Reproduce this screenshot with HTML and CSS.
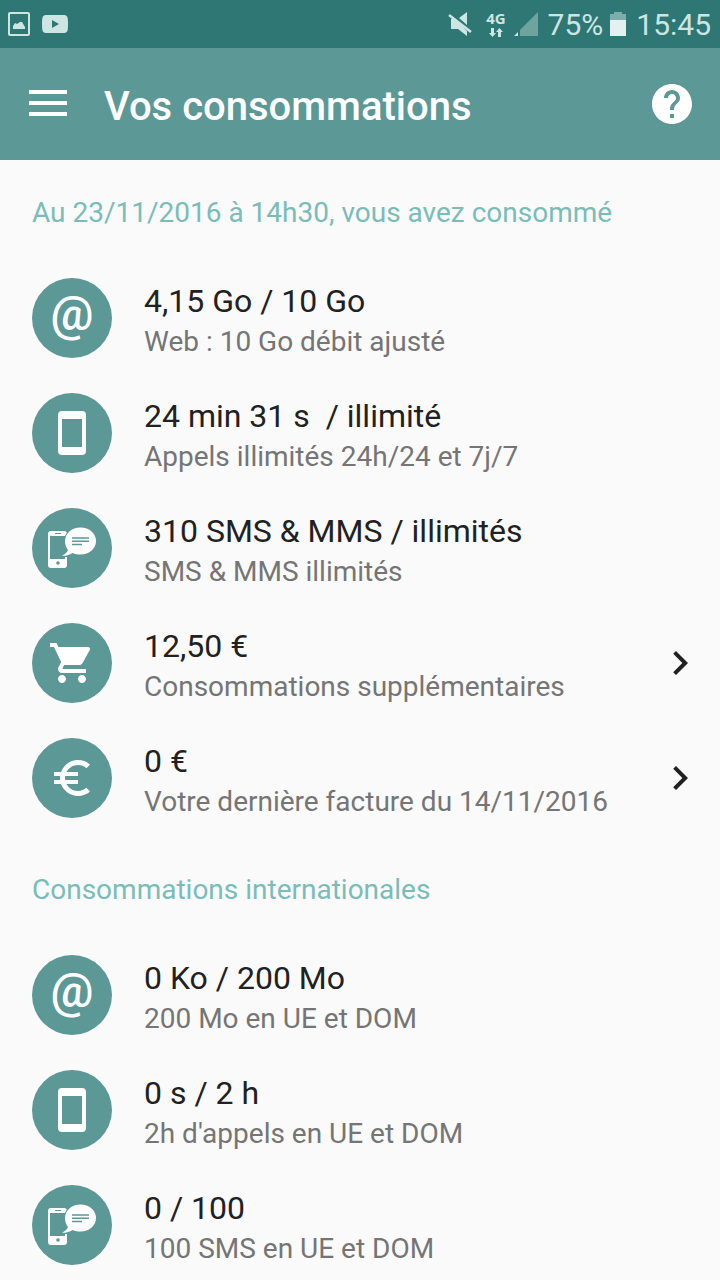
FILE: index.html
```html
<!DOCTYPE html>
<html lang="fr">
<head>
<meta charset="utf-8">
<meta name="viewport" content="width=device-width, initial-scale=1">
<title>Vos consommations</title>
<link rel="stylesheet" href="styles.css">
</head>
<body>
<svg class="sprite" aria-hidden="true">
  <symbol id="phone" viewBox="0 0 80 80"><path fill-rule="evenodd" d="M30 18h20a4 4 0 0 1 4 4v36a4 4 0 0 1-4 4H30a4 4 0 0 1-4-4V22a4 4 0 0 1 4-4zM30 26v28h20V26z"/></symbol>
  <symbol id="sms" viewBox="0 0 80 80">
    <rect x="16" y="23" width="19" height="37" rx="3"/>
    <path class="hole" d="M18 28h18v21h-3v2H18z"/>
    <rect class="hole" x="23" y="25" width="6" height="1"/>
    <circle class="hole" cx="26" cy="55" r="1.8"/>
    <path class="bubble" d="M48.500 19.500C57.500 19.500 64 25.500 64 33S57.500 46.500 48.500 46.500C45.500 46.500 43 46 40.500 45C37.500 47 34 48 30 47.800C33 46 35 44.500 36 42C34 39.500 33 36.500 33 33C33 25.500 39.500 19.500 48.500 19.500z"/>
    <path class="lines" d="M40 30h17M40 33.300h17M40 36.600h10"/>
  </symbol>
  <symbol id="cart" viewBox="-8 -8 40 40"><path d="M7 18c-1.100 0-1.990.9-1.990 2S5.900 22 7 22s2-.9 2-2-.9-2-2-2zM1 2v2h2l3.600 7.590-1.350 2.450c-.16.280-.25.610-.25.960 0 1.100.9 2 2 2h12v-2H7.420c-.14 0-.25-.11-.25-.25l.03-.12.900-1.630h7.450c.75 0 1.410-.41 1.750-1.030l3.580-6.490c.08-.14.120-.31.120-.48 0-.55-.45-1-1-1H5.210l-.94-2H1zm16 16c-1.100 0-1.990.9-1.990 2s.89 2 1.990 2 2-.9 2-2-.9-2-2-2z"/></symbol>
  <symbol id="euro" viewBox="-8 -8 40 40"><path d="M15 18.500c-2.510 0-4.680-1.420-5.760-3.500H15v-2H8.580c-.05-.33-.08-.66-.08-1s.03-.67.080-1H15V9H9.240C10.320 6.920 12.500 5.500 15 5.500c1.610 0 3.090.59 4.230 1.570L21 5.300C19.410 3.870 17.300 3 15 3c-3.920 0-7.240 2.510-8.480 6H3v2h3.060c-.04.330-.06.660-.06 1s.02.670.060 1H3v2h3.520c1.240 3.490 4.560 6 8.480 6 2.310 0 4.410-.87 6-2.300l-1.780-1.770c-1.130.980-2.600 1.570-4.220 1.570z"/></symbol>
  <symbol id="chevron" viewBox="0 0 24 24"><path d="M10 6L8.590 7.410 13.170 12l-4.580 4.590L10 18l6-6z"/></symbol>
</svg>

<div class="status-bar">
  <div class="status-group notifications">
    <svg width="22" height="24" viewBox="0 0 22 24" aria-hidden="true"><rect x="1" y="1" width="20" height="22" rx="1" fill="none" stroke="currentColor" stroke-width="2"/><path d="M5 17v-3l2-3 2 1 3-2 2 0 3 5v2z"/></svg>
    <svg width="26" height="18" viewBox="0 0 26 18" aria-hidden="true"><path fill-rule="evenodd" d="M4 0Q13-.5 22 0Q25.500 0 25.800 4Q26.200 9 25.800 14Q25.500 18 22 18Q13 18.500 4 18Q.5 18 .2 14Q-.2 9 .2 4Q.5 0 4 0zM10 5v8l7-4z"/></svg>
  </div>
  <div class="status-group">
    <svg width="24" height="26" viewBox="0 0 24 26" aria-hidden="true"><path d="M3 8h4l12 12v5l-9-7H3zM11 7l8-6v13z"/><path d="M1 4l22 17" fill="none" stroke="currentColor" stroke-width="2.500"/></svg>
    <div class="network">
      <span class="network-type">4G</span>
      <svg width="14" height="9" viewBox="0 0 14 9" aria-hidden="true"><path d="M2 0h3v5h2l-3.500 4L0 5h2zM9 9h3V4h2l-3.500-4L7 4h2z"/></svg>
    </div>
    <svg class="signal" width="24" height="24" viewBox="0 0 24 24" aria-hidden="true"><path opacity=".4" d="M24 0v24H6V18z"/><path d="M4 20v4H0z"/></svg>
    <div class="battery">
      <span class="status-text">75%</span>
      <svg width="16" height="24" viewBox="0 0 16 24" aria-hidden="true"><path opacity=".5" d="M4 0h8v2h4v6H0V2h4z"/><path class="charge" d="M0 8h16v16H0z"/></svg>
    </div>
    <time class="status-text">15:45</time>
  </div>
</div>

<header class="app-bar">
  <button class="icon-button" type="button" aria-label="Menu"><svg width="38" height="28" viewBox="0 0 38 28"><path d="M0 0h38v4H0zM0 11h38v4H0zM0 22h38v4H0z"/></svg></button>
  <h1 class="title">Vos consommations</h1>
  <button class="icon-button" type="button" aria-label="Aide"><svg width="48" height="48" viewBox="0 0 24 24"><path d="M12 2C6.480 2 2 6.480 2 12s4.480 10 10 10 10-4.480 10-10S17.520 2 12 2zm1 17h-2v-2h2v2zm2.070-7.750l-.9.920C13.450 12.900 13 13.500 13 15h-2v-.5c0-1.100.45-2.100 1.170-2.830l1.240-1.260c.37-.36.590-.86.590-1.410 0-1.100-.9-2-2-2s-2 .9-2 2H8c0-2.210 1.790-4 4-4s4 1.790 4 4c0 .880-.36 1.680-.93 2.250z"/></svg></button>
</header>

<main class="content">
  <section class="section">
    <h2 class="heading">Au 23/11/2016 à 14h30, vous avez consommé</h2>
    <ul class="list">
      <li class="row"><span class="badge at-sign" aria-hidden="true">@</span><div class="info"><p class="amount">4,15 Go / 10 Go</p><p class="detail">Web : 10 Go débit ajusté</p></div></li>
      <li class="row"><svg class="badge" aria-hidden="true"><use href="#phone"/></svg><div class="info"><p class="amount">24 min 31 s&nbsp; / illimité</p><p class="detail">Appels illimités 24h/24 et 7j/7</p></div></li>
      <li class="row"><svg class="badge" aria-hidden="true"><use href="#sms"/></svg><div class="info"><p class="amount">310 SMS &amp; MMS / illimités</p><p class="detail">SMS &amp; MMS illimités</p></div></li>
      <li><a class="row" href="#supplements"><svg class="badge" aria-hidden="true"><use href="#cart"/></svg><div class="info"><p class="amount">12,50 €</p><p class="detail">Consommations supplémentaires</p></div><svg class="chevron" aria-hidden="true"><use href="#chevron"/></svg></a></li>
      <li><a class="row" href="#facture"><svg class="badge" aria-hidden="true"><use href="#euro"/></svg><div class="info"><p class="amount">0 €</p><p class="detail">Votre dernière facture du 14/11/2016</p></div><svg class="chevron" aria-hidden="true"><use href="#chevron"/></svg></a></li>
    </ul>
  </section>
  <section class="section">
    <h2 class="heading">Consommations internationales</h2>
    <ul class="list">
      <li class="row"><span class="badge at-sign" aria-hidden="true">@</span><div class="info"><p class="amount">0 Ko / 200 Mo</p><p class="detail">200 Mo en UE et DOM</p></div></li>
      <li class="row"><svg class="badge" aria-hidden="true"><use href="#phone"/></svg><div class="info"><p class="amount">0 s / 2 h</p><p class="detail">2h d'appels en UE et DOM</p></div></li>
      <li class="row"><svg class="badge" aria-hidden="true"><use href="#sms"/></svg><div class="info"><p class="amount">0 / 100</p><p class="detail">100 SMS en UE et DOM</p></div></li>
    </ul>
  </section>
</main>
</body>
</html>
```
FILE: styles.css
```css
:root {
  --teal: #5b9896;
  --teal-dark: #2f7774;
  --teal-light: #7abdb8;
}

* {
  box-sizing: border-box;
}

body {
  margin: 0;
  background: #fafafa;
  color: #212121;
  font-family: Roboto, "Noto Sans", sans-serif;
}

h1, h2, p, ul {
  margin: 0;
  padding: 0;
  font-weight: 400;
}

ul {
  list-style: none;
}

svg {
  display: block;
  flex: none;
  fill: currentColor;
}

.sprite {
  position: absolute;
  width: 0;
  height: 0;
}

.status-bar {
  display: flex;
  justify-content: space-between;
  height: 48px;
  padding: 0 9px 0 8px;
  background: var(--teal-dark);
  color: #cde5e3;
}

.status-group {
  display: flex;
  align-items: center;
  gap: 10px;
}

.notifications {
  gap: 12px;
}

.network {
  display: flex;
  flex-direction: column;
  align-items: center;
  gap: 3px;
  margin-left: 4px;
}

.network-type {
  font-family: "Open Sans", sans-serif;
  font-size: 15px;
  font-weight: 700;
  line-height: 13px;
}

.battery {
  display: flex;
  align-items: center;
  gap: 7px;
}

.status-text {
  padding-top: 2px;
  font-size: 30px;
  line-height: 46px;
}

.signal {
  margin-left: -2px;
}

.charge {
  fill: #e4f1f0;
}

.app-bar {
  display: flex;
  align-items: center;
  height: 112px;
  padding: 0 24px 0 29px;
  background: var(--teal);
  color: #fff;
}

.icon-button {
  flex: none;
  padding: 0;
  border: 0;
  background: none;
  color: inherit;
}

.title {
  flex: 1;
  margin-left: 37px;
  padding-top: 6px;
  font-size: 40px;
  font-weight: 500;
  line-height: 48px;
}

.section {
  padding: 37px 16px 14px 32px;
}

.heading {
  margin-bottom: 49px;
  color: var(--teal-light);
  font-size: 28px;
  line-height: 32px;
}

.list {
  display: grid;
  gap: 30px;
}

.row {
  display: flex;
  align-items: flex-start;
  color: inherit;
  text-decoration: none;
}

.badge {
  flex: none;
  width: 80px;
  height: 80px;
  border-radius: 50%;
  background: var(--teal);
  color: #fff;
}

.at-sign {
  font-size: 48px;
  font-weight: 500;
  line-height: 72px;
  text-align: center;
}

.hole {
  fill: var(--teal);
}

.bubble {
  stroke: var(--teal);
  stroke-width: 2;
  paint-order: stroke;
}

.lines {
  stroke: var(--teal);
  stroke-width: 1.5;
}

.info {
  flex: 1;
  min-width: 0;
  margin-left: 32px;
  padding-top: 3px;
}

.amount {
  font-size: 32px;
  line-height: 40px;
}

.detail {
  color: #757575;
  font-size: 28px;
  line-height: 42px;
}

.chevron {
  width: 48px;
  height: 48px;
  margin-top: 16px;
}
```
